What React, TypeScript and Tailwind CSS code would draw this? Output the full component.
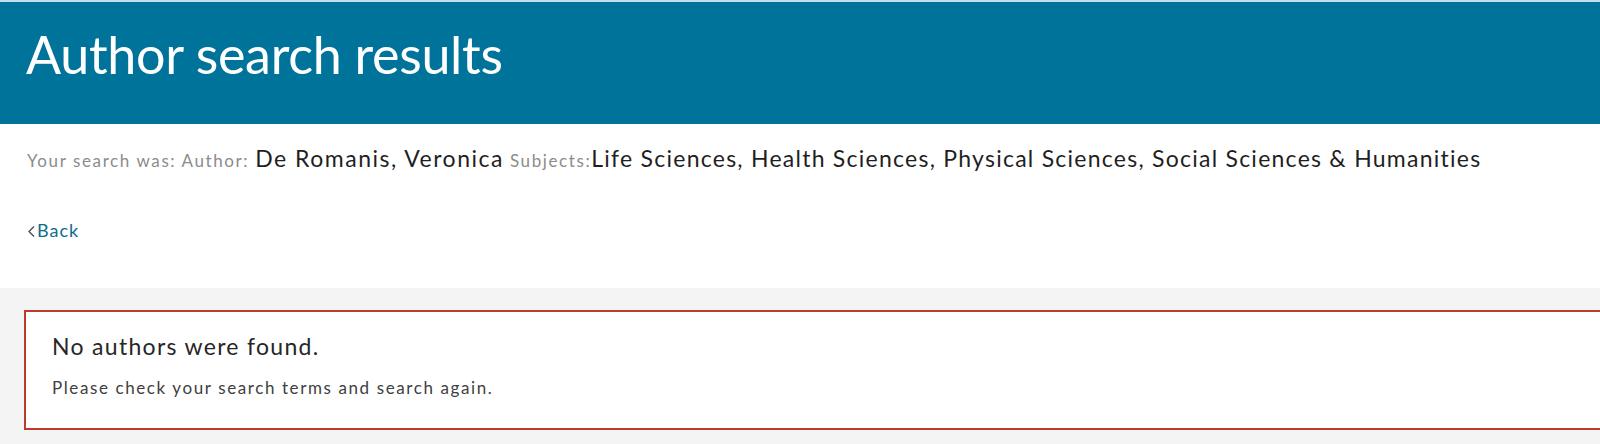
export default function App() {
  return (
    <div className="min-h-[444px] w-[1600px] overflow-hidden bg-white font-['Lato','Open_Sans',sans-serif]">
      <div className="h-[2px] bg-[#bfe0ea]" />
      <header className="h-[122px] bg-[#00739a] px-[26px] pt-[26px]">
        <h1 className="text-[52px] leading-none tracking-[-0.3px] text-white">Author search results</h1>
      </header>

      <section className="h-[164px] px-[27px] pt-[21px]">
        <p className="flex items-baseline whitespace-nowrap leading-[1.2]">
          <span className="text-[17px] tracking-[1.6px] text-[#8c8c8c]">Your search was: Author:</span>
          <span className="ml-[6px] text-[23px] tracking-[1.5px] text-[#1f1f1f]">De Romanis, Veronica</span>
          <span className="ml-[6px] text-[17px] tracking-[1.6px] text-[#8c8c8c]">Subjects:</span>
          <span className="text-[23px] tracking-[1.25px] text-[#1f1f1f]">
            Life Sciences, Health Sciences, Physical Sciences, Social Sciences &amp; Humanities
          </span>
        </p>
        <a href="#" className="mt-[47px] flex items-center leading-[1.2] text-[18px] tracking-[1px] text-[#0c6e8c]">
          <svg width="10" height="12" viewBox="0 0 10 12" className="mt-[2px]">
            <path d="M7 1.5 L2 6.5 L7 11.5" fill="none" stroke="#4a4a4a" strokeWidth="1.3" />
          </svg>
          Back
        </a>
      </section>

      <main className="bg-[#f4f4f4] pb-[14px] pl-[24px] pt-[22px]">
        <div className="h-[120px] border-2 border-r-0 border-[#bd3a2e] bg-white pl-[26px] pt-[21px]">
          <h2 className="text-[23px] leading-[1.2] tracking-[1.3px] text-[#262626]">No authors were found.</h2>
          <p className="mt-[17px] text-[17px] leading-[1.2] tracking-[1.6px] text-[#404040]">
            Please check your search terms and search again.
          </p>
        </div>
      </main>
    </div>
  );
}
